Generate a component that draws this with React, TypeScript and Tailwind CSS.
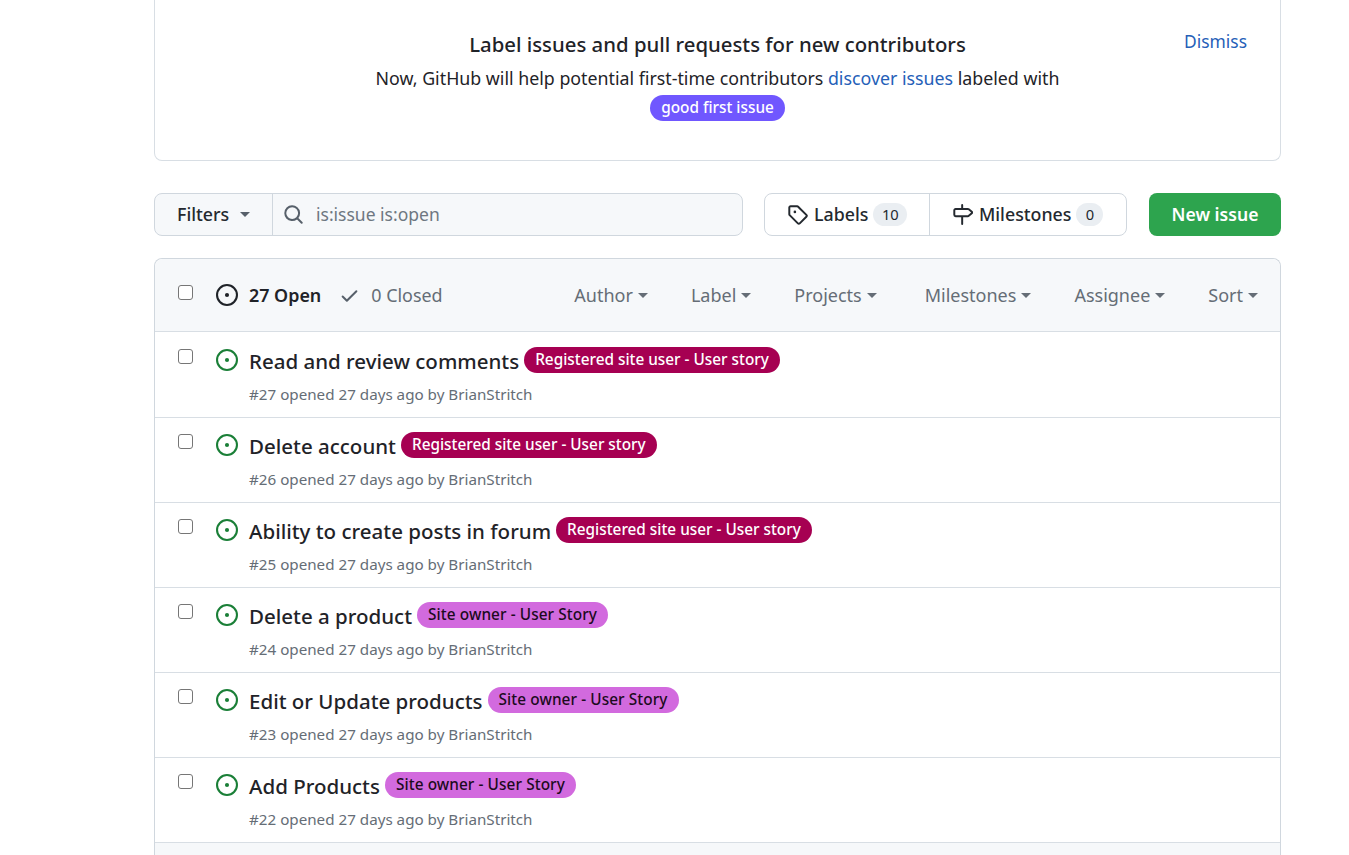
const FONT = "font-['Noto_Sans','Liberation_Sans',sans-serif]";

const issuePath = "M8 9.5a1.5 1.5 0 1 0 0-3 1.5 1.5 0 0 0 0 3Z M8 0a8 8 0 1 1 0 16A8 8 0 0 1 8 0ZM1.5 8a6.5 6.5 0 1 0 13 0 6.5 6.5 0 0 0-13 0Z";
const tagPath = "M1 7.775V2.75C1 1.784 1.784 1 2.75 1h5.025c.464 0 .91.184 1.238.513l6.25 6.25a1.75 1.75 0 0 1 0 2.474l-5.026 5.026a1.75 1.75 0 0 1-2.474 0l-6.25-6.25A1.752 1.752 0 0 1 1 7.775Zm1.5 0c0 .066.026.13.073.177l6.25 6.25a.25.25 0 0 0 .354 0l5.025-5.025a.25.25 0 0 0 0-.354l-6.25-6.25a.25.25 0 0 0-.177-.073H2.75a.25.25 0 0 0-.25.25ZM6 5a1 1 0 1 1 0 2 1 1 0 0 1 0-2Z";
const milestonePath = "M7.75 0a.75.75 0 0 1 .75.75V3h3.634c.414 0 .814.147 1.13.414l2.07 1.75a1.75 1.75 0 0 1 0 2.672l-2.07 1.75a1.75 1.75 0 0 1-1.13.414H8.5v5.25a.75.75 0 0 1-1.5 0V10H2.75A1.75 1.75 0 0 1 1 8.25v-3.5C1 3.784 1.784 3 2.75 3H7V.75A.75.75 0 0 1 7.75 0Zm4.384 8.5a.25.25 0 0 0 .161-.06l2.07-1.75a.25.25 0 0 0 0-.38l-2.07-1.75a.25.25 0 0 0-.161-.06H2.75a.25.25 0 0 0-.25.25v3.5c0 .138.112.25.25.25h9.384Z";
const checkPath = "M13.78 4.22a.75.75 0 0 1 0 1.06l-7.25 7.25a.75.75 0 0 1-1.06 0L2.22 9.28a.751.751 0 0 1 .018-1.042.751.751 0 0 1 1.042-.018L6 10.94l6.72-6.72a.75.75 0 0 1 1.06 0Z";
const searchPath = "M10.68 11.74a6 6 0 0 1-7.922-8.982 6 6 0 0 1 8.982 7.922l3.04 3.04a.749.749 0 0 1-.326 1.275.749.749 0 0 1-.734-.215ZM11.5 7a4.499 4.499 0 1 0-8.997 0A4.499 4.499 0 0 0 11.5 7Z";

function Octicon({ d, className }: { d: string; className: string }) {
  return (
    <svg viewBox="0 0 16 16" fill="currentColor" className={className}>
      <path d={d} />
    </svg>
  );
}

function Caret({ className = "" }: { className?: string }) {
  return <span className={`inline-block h-0 w-0 border-x-[5.5px] border-t-[5.5px] border-x-transparent border-t-current ${className}`} />;
}

function Checkbox() {
  return <span className="block h-[15px] w-[15px] rounded-[3px] border border-[#767676] bg-white" />;
}

const REG = { text: "Registered site user - User story", cls: "bg-[#a60052] text-white" };
const OWNER = { text: "Site owner - User Story", cls: "bg-[#d26ade] tracking-[0.09px] text-[#1c0a20]" };

const ISSUES = [
  { title: "Read and review comments", num: 27, label: REG },
  { title: "Delete account", num: 26, label: REG },
  { title: "Ability to create posts in forum", num: 25, label: REG },
  { title: "Delete a product", num: 24, label: OWNER },
  { title: "Edit or Update products", num: 23, label: OWNER },
  { title: "Add Products", num: 22, label: OWNER },
];

const FILTERS = [
  { name: "Author", ml: "" },
  { name: "Label", ml: "ml-[43px]" },
  { name: "Projects", ml: "ml-[43px]" },
  { name: "Milestones", ml: "ml-[48px]" },
  { name: "Assignee", ml: "ml-[43px]" },
  { name: "Sort", ml: "ml-[43px]" },
];

function IssueRow({ title, num, label, first }: (typeof ISSUES)[number] & { first: boolean }) {
  return (
    <div className={`flex border-t border-[#d8dee4] bg-white pl-[23px] ${first ? "h-[86px] pt-[16px]" : "h-[85px] pt-[15px]"}`}>
      <div className="w-[38px] pt-px">
        <Checkbox />
      </div>
      <Octicon d={issuePath} className="mt-[1px] h-[22px] w-[22px] text-[#1a7f37]" />
      <div className="ml-[11px]">
        <div className="flex h-[28px] items-center">
          <span className="-mt-[2px] text-[20.5px] leading-[28px] font-medium text-[#1f2328]">{title}</span>
          <span className={`ml-[5px] -mt-[5px] flex h-[26px] items-center rounded-full px-[11px] text-[15.35px] font-medium ${label.cls}`}>
            {label.text}
          </span>
        </div>
        <div className="mt-[8px] text-[15.2px] leading-[20px] text-[#656d76]">
          #{num} opened 27 days ago by BrianStritch
        </div>
      </div>
    </div>
  );
}

export default function App() {
  return (
    <div className={`h-[855px] overflow-hidden bg-white ${FONT}`}>
      <div className="ml-[154px] w-[1127px]">
        {/* banner */}
        <div className="relative h-[161px] rounded-b-lg border-x border-b border-[#d8dee4] pt-[30px] text-center">
          <a className="absolute top-[29px] right-[33px] text-[17.4px] leading-[24px] text-[#2560b8]">Dismiss</a>
          <h2 className="text-[20.35px] leading-[28px] font-medium text-[#1f2328]">Label issues and pull requests for new contributors</h2>
          <p className="mt-[5px] text-[17.8px] leading-[30px] text-[#1f2328]">
            Now, GitHub will help potential first-time contributors <a className="text-[#2560b8]">discover issues</a> labeled with
          </p>
          <div className="mt-[2px] flex justify-center">
            <span className="flex h-[26px] items-center rounded-full bg-[#7057ff] px-[11px] text-[15.35px] font-medium text-white">good first issue</span>
          </div>
        </div>

        {/* toolbar */}
        <div className="mt-[32px] flex h-[43px]">
          <div className="flex w-[589px] rounded-lg border border-[#d0d7de] bg-[#f6f8fa]">
            <div className="flex w-[118px] items-center border-r border-[#d0d7de] pl-[22px] text-[17.8px] font-medium text-[#24292f]">
              Filters
              <Caret className="ml-[11px] text-[#57606a]" />
            </div>
            <div className="flex flex-1 items-center pl-[10px] text-[17.5px] text-[#6e7781]">
              <Octicon d={searchPath} className="h-[21px] w-[21px] text-[#57606a]" />
              <span className="ml-[12px]">is:issue is:open</span>
            </div>
          </div>
          <div className="ml-[21px] flex w-[363px] rounded-lg border border-[#d0d7de] text-[17.8px] font-medium text-[#24292f]">
            <div className="flex w-[165px] items-center border-r border-[#d0d7de] pl-[22px]">
              <Octicon d={tagPath} className="h-[21px] w-[21px] text-[#24292f]" />
              <span className="ml-[6px]">Labels</span>
              <span className="ml-[5px] flex h-[23px] w-[34px] items-center justify-center rounded-full bg-[#eaeef2] text-[14.7px] font-normal">10</span>
            </div>
            <div className="flex flex-1 items-center pl-[22px]">
              <Octicon d={milestonePath} className="h-[21px] w-[21px] text-[#24292f]" />
              <span className="ml-[6px]">Milestones</span>
              <span className="ml-[5px] flex h-[23px] w-[27px] items-center justify-center rounded-full bg-[#eaeef2] text-[14.7px] font-normal">0</span>
            </div>
          </div>
          <button className="ml-[22px] flex w-[132px] items-center justify-center rounded-lg bg-[#2da44e] text-[17.6px] font-semibold text-white">
            New issue
          </button>
        </div>

        {/* issue list */}
        <div className="mt-[22px] rounded-t-lg border-x border-t border-[#d0d7de]">
          <div className="flex h-[72px] items-center rounded-t-lg bg-[#f6f8fa] pl-[23px]">
            <div className="-mt-[5px] w-[38px]">
              <Checkbox />
            </div>
            <Octicon d={issuePath} className="h-[22px] w-[22px] text-[#1f2328]" />
            <span className="ml-[11px] text-[17.9px] font-semibold text-[#1f2328]">27 Open</span>
            <Octicon d={checkPath} className="ml-[18px] h-[21px] w-[21px] text-[#57606a]" />
            <span className="ml-[11px] text-[17.9px] text-[#656d76]">0 Closed</span>
            <div className="ml-auto flex pr-[22px] text-[18px] text-[#656d76]">
              {FILTERS.map((f) => (
                <span key={f.name} className={`flex items-center ${f.ml}`}>
                  {f.name}
                  <Caret className="ml-[5px]" />
                </span>
              ))}
            </div>
          </div>
          {ISSUES.map((i, idx) => (
            <IssueRow key={i.num} {...i} first={idx === 0} />
          ))}
          <div className="h-[20px] border-t border-[#d8dee4] bg-[#f6f8fa]" />
        </div>
      </div>
    </div>
  );
}
